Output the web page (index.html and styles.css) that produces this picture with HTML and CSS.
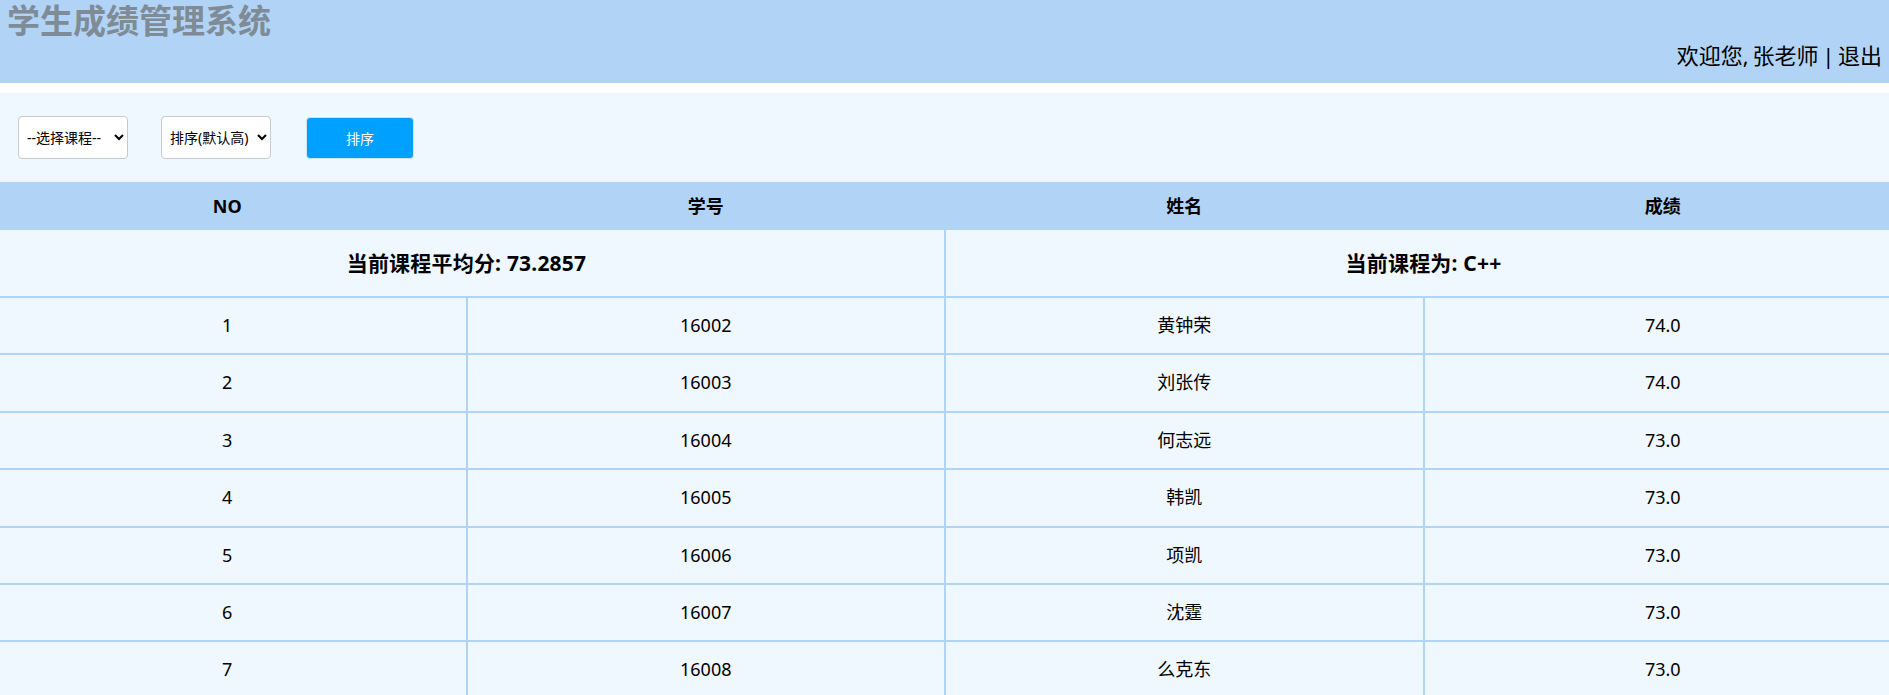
FILE: index.html
```html
<!DOCTYPE html>
<html lang="zh-CN">
<head>
  <meta charset="UTF-8">
  <meta name="viewport" content="width=device-width, initial-scale=1.0">
  <title>学生成绩管理系统</title>
  <link rel="stylesheet" href="styles.css">
</head>
<body>
  <div class="header">
    <h1 class="title">学生成绩管理系统</h1>
    <div class="user">欢迎您, 张老师 | <a href="#">退出</a></div>
  </div>

  <div class="main">
    <form class="toolbar">
      <select name="course">
        <option>--选择课程--</option>
        <option>C++</option>
        <option>Java</option>
      </select>
      <select name="order">
        <option>排序(默认高)</option>
        <option>排序(低)</option>
      </select>
      <button type="button" class="btn">排序</button>
    </form>

    <div class="table-wrap">
      <table class="score-table">
        <thead>
          <tr>
            <th>NO</th>
            <th>学号</th>
            <th>姓名</th>
            <th>成绩</th>
          </tr>
        </thead>
        <tbody>
          <tr class="summary">
            <td colspan="2">当前课程平均分: 73.2857</td>
            <td colspan="2">当前课程为: C++</td>
          </tr>
          <tr><td>1</td><td>16002</td><td>黄钟荣</td><td>74.0</td></tr>
          <tr><td>2</td><td>16003</td><td>刘张传</td><td>74.0</td></tr>
          <tr><td>3</td><td>16004</td><td>何志远</td><td>73.0</td></tr>
          <tr><td>4</td><td>16005</td><td>韩凯</td><td>73.0</td></tr>
          <tr><td>5</td><td>16006</td><td>项凯</td><td>73.0</td></tr>
          <tr><td>6</td><td>16007</td><td>沈霆</td><td>73.0</td></tr>
          <tr><td>7</td><td>16008</td><td>么克东</td><td>73.0</td></tr>
          <tr><td>8</td><td>16009</td><td>王磊</td><td>72.0</td></tr>
        </tbody>
      </table>
    </div>
  </div>
</body>
</html>
```

FILE: styles.css
```css
/* 页面基础 */
body {
  margin: 0;
  padding: 0;
  font-family: "Noto Sans", "Noto Sans CJK SC", sans-serif;
  color: #000;
  background: #fff;
}

.header {
  height: 83px;
  background-color: #b1d3f5;
}

.title {
  margin: 0;
  padding-left: 7px;
  padding-top: 1px;
  font-size: 33px;
  line-height: 36px;
  font-weight: bold;
  color: #7f8b96;
  font-family: "Noto Sans CJK SC", sans-serif;
}

.user {
  text-align: right;
  padding-right: 7px;
  font-size: 22px;
  line-height: 36px;
  word-spacing: -2px;
}

.user a {
  color: #000;
  text-decoration: none;
}

.main {
  margin-top: 10px;
  background-color: #eff7ff;
  min-height: 700px;
}

.toolbar {
  display: flex;
  align-items: center;
  padding: 23px 0 23px 18px;
  margin: 0;
}

.toolbar select {
  width: 110px;
  height: 43px;
  margin-right: 33px;
  padding: 0 4px;
  font-size: 14px;
  font-family: "Noto Sans", "Noto Sans CJK SC", sans-serif;
  background: #fff;
  border: 1px solid #c9c9c9;
  border-radius: 4px;
  color: #000;
}

.toolbar select + select {
  margin-right: 35px;
}

.btn {
  width: 108px;
  height: 42px;
  background-color: #00a0ff;
  color: white;
  border: 1px solid #d4e3ef;
  border-radius: 4px;
  font-size: 14px;
  font-family: "Noto Sans CJK SC", sans-serif;
  cursor: pointer;
}

.table-wrap {
  overflow: hidden;
}

.score-table {
  width: calc(100% + 27px);
  margin-left: -13px;
  border-collapse: collapse;
  table-layout: fixed;
  text-align: center;
}

.score-table th,
.score-table td {
  border: 2px solid #b1d3f5;
}

.score-table th {
  background-color: #b1d3f5;
  font-size: 18px;
  font-weight: bold;
  line-height: 24px;
  padding: 10px 0;
}

.score-table td {
  font-size: 18px;
  line-height: 25.4px;
  padding: 15px 0;
}

.summary td {
  font-size: 21px;
  font-weight: bold;
  line-height: 26px;
  padding: 20px 0;
  letter-spacing: 0.2px;
}
```
